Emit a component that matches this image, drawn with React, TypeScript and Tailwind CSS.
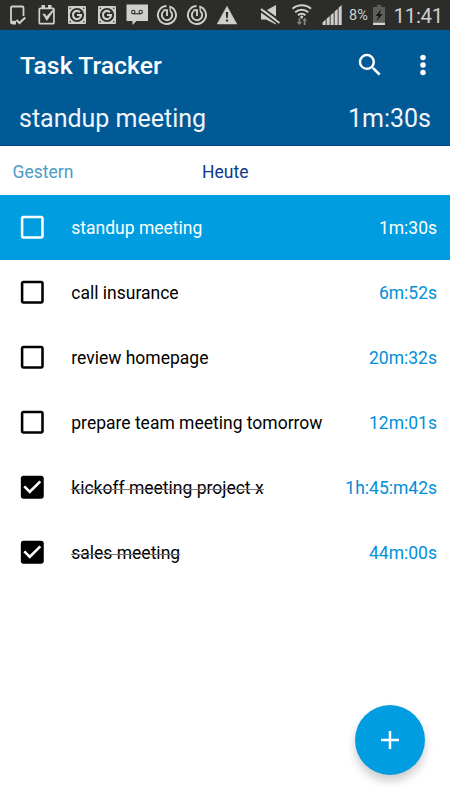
import type { ReactNode } from "react";

interface Task {
  id: number;
  title: string;
  time: string;
  done?: boolean;
  active?: boolean;
}

const TASKS: Task[] = [
  { id: 1, title: "standup meeting",               time: "1m:30s", active: true },
  { id: 2, title: "call insurance",                time: "6m:52s" },
  { id: 3, title: "review homepage",               time: "20m:32s" },
  { id: 4, title: "prepare team meeting tomorrow", time: "12m:01s" },
  { id: 5, title: "kickoff meeting project x",     time: "1h:45:m42s", done: true },
  { id: 6, title: "sales meeting",                 time: "44m:00s",    done: true },
];

// ── Status bar icons ──────────────────────────────────────
const StatusIcon = ({ children }: { children: ReactNode }) => (
  <svg viewBox="0 0 30 30" className="w-[30px] h-[30px] shrink-0" fill="currentColor">
    {children}
  </svg>
);

const DeviceCheck = () => (
  <StatusIcon>
    <path d="M14 23.500H10.200A1.200 1.200 0 0 1 9 22.300V7.700A1.200 1.200 0 0 1 10.200 6.500H20.300A1.200 1.200 0 0 1 21.500 7.700V16" fill="none" stroke="currentColor" strokeWidth="1.800" />
    <path d="M9 20.800h5v3.200H9z" />
    <path d="M14.500 20l3 3 5.800-5.500" fill="none" stroke="currentColor" strokeWidth="2" />
  </StatusIcon>
);

const ClipboardCheck = () => (
  <StatusIcon>
    <rect x="7.300" y="8.300" width="14.600" height="15.400" rx="1" fill="none" stroke="currentColor" strokeWidth="1.700" />
    <path d="M9.500 5h3.500v3H9.500zM16 5h3.500v3H16z" />
    <path d="M10.300 13.500l3 .5 1.200 2.200L21 9.500l2-.5-8.200 12z" />
  </StatusIcon>
);

const GearBox = () => (
  <StatusIcon>
    <rect x="6" y="6" width="18" height="18" rx="1" />
    <circle cx="15" cy="15" r="7.100" fill="#2c2c2a" />
    <path d="M18 12.200a4.100 4.100 0 1 0 1.100 2.800H15" fill="none" stroke="currentColor" strokeWidth="2.100" />
    <g fill="#2c2c2a">
      <circle cx="8.200" cy="8.200" r=".8" />
      <circle cx="21.800" cy="8.200" r=".8" />
      <circle cx="8.200" cy="21.800" r=".8" />
      <circle cx="21.800" cy="21.800" r=".8" />
    </g>
  </StatusIcon>
);

const Voicemail = () => (
  <StatusIcon>
    <path d="M4.500 4.500h21.500v16.500H14.500l-4 4V21h-6z" />
    <g fill="none" stroke="#2c2c2a" strokeWidth="1.100">
      <circle cx="11.300" cy="12" r="1.700" />
      <circle cx="18.700" cy="12" r="1.700" />
      <path d="M11.300 13.800h7.400" />
    </g>
  </StatusIcon>
);

const PowerRing = () => (
  <StatusIcon>
    <g fill="none" stroke="currentColor" strokeWidth="1.900">
      <path d="M17.300 6.300A9 9 0 1 1 14.500 6" />
      <path d="M18.200 10.900a5.200 5.200 0 1 1-6.600.2" />
      <path d="M18.200 7v4.200" strokeWidth="1.300" />
      <path d="M11.300 10.300h3.700v5.700" />
    </g>
  </StatusIcon>
);

const Warning = () => (
  <StatusIcon>
    <path d="M15 6.200L24.800 24H5.200z" stroke="currentColor" strokeWidth=".5" strokeLinejoin="round" />
    <path d="M13.800 12h2.400l-.4 6h-1.600zM13.900 19.500h2.200v2.100h-2.200z" fill="#2c2c2a" />
  </StatusIcon>
);

const Muted = () => (
  <StatusIcon>
    <path d="M5 10.500h5L20 5v19.500l-10-5H5z" />
    <path d="M4.500 11l20 14.500" stroke="#2c2c2a" strokeWidth="2" />
    <path d="M4.500 6.500l20 14.500" stroke="#2c2c2a" strokeWidth="2" />
    <path d="M5 9l18.500 14" stroke="currentColor" strokeWidth="1.800" />
  </StatusIcon>
);

const Wifi = () => (
  <StatusIcon>
    <g fill="none" stroke="currentColor" strokeWidth="2">
      <path d="M6.500 8.800a14 14 0 0 1 18.500 0" />
      <path d="M9.200 12.300a9.600 9.600 0 0 1 13 0" />
      <path d="M12 15.300a5.500 5.500 0 0 1 7.400 0" />
    </g>
    <circle cx="15.700" cy="16.900" r="1.500" />
    <path d="M12.600 18v4h-2l2.800 3 2.700-3h-1.800v-4zM17.700 25v-4.200h-1.500l2.500-3 2.500 3h-1.700V25z" fill="#858583" />
  </StatusIcon>
);

const Signal = () => (
  <StatusIcon>
    <path d="M6.500 22.500l3.200-2.900v5.400H6.500zM10.600 18.800l3.100-2.800v9h-3.100zM14.600 15.200l3.100-2.800V25h-3.100zM18.600 11.500l3.100-2.800V25h-3.100zM22.600 7.700L25.700 5v20h-3.100z" />
  </StatusIcon>
);

const Battery = () => (
  <svg viewBox="0 0 14 30" className="w-[14px] h-[30px] shrink-0">
    <path d="M5 5h4v2h4v18H1V7h4z" fill="#5e5e5c" />
    <path d="M9.500 9L3.500 16h3.200L4.500 21l6.200-7H7.500z" fill="#171716" />
    <path d="M1 22.800h12V25H1z" fill="#d6d6d4" />
  </svg>
);

const StatusBar = () => (
  <div className="flex items-center h-[30px] pl-[2px] bg-[#2c2c2a] text-[#cfcfcd]">
    <DeviceCheck />
    <ClipboardCheck />
    <GearBox />
    <GearBox />
    <Voicemail />
    <PowerRing />
    <PowerRing />
    <Warning />
    <div className="w-[14px]" />
    <Muted />
    <Wifi />
    <Signal />
    <span className="ml-[3px] w-[22.500px] pt-[2px] text-[14.500px] leading-[30px] whitespace-nowrap">8%</span>
    <Battery />
    <span className="ml-[8px] pt-px text-[20.500px] leading-[30px] tracking-[-0.300px]">11:41</span>
  </div>
);

// ── Header ────────────────────────────────────────────────
const Header = () => (
  <header className="h-[116px] bg-[#005a96] text-white border-b border-[#00418a]">
    <div className="flex items-center h-[70px] pl-[20px] pr-[12.500px]">
      <h1 className="flex-1 pt-[2px] text-[24.800px] font-medium leading-[30px]">Task Tracker</h1>
      <button aria-label="Search">
        <svg viewBox="0 0 24 24" className="w-[30px] h-[30px]" fill="currentColor">
          <path d="M15.500 14h-.79l-.28-.27A6.471 6.471 0 0 0 16 9.500 6.500 6.500 0 1 0 9.500 16c1.610 0 3.090-.59 4.230-1.570l.27.28v.79l5 4.990L20.490 19l-4.990-5zm-6 0C7.010 14 5 11.990 5 9.500S7.010 5 9.500 5 14 7.010 14 9.500 11.990 14 9.500 14z" />
        </svg>
      </button>
      <button aria-label="More" className="ml-[23px]">
        <svg viewBox="0 0 24 24" className="w-[30px] h-[30px]" fill="currentColor">
          <circle cx="12" cy="6" r="2.200" />
          <circle cx="12" cy="12" r="2.200" />
          <circle cx="12" cy="18" r="2.200" />
        </svg>
      </button>
    </div>
    <div className="flex justify-between pt-[4px] px-[19px] text-[25px] leading-[30px] text-[#f0f5fa]">
      <span>standup meeting</span>
      <span>1m:30s</span>
    </div>
  </header>
);

// ── Task list ─────────────────────────────────────────────
const Checkbox = ({ checked }: { checked?: boolean }) => (
  <svg viewBox="0 0 24 24" className="w-[30.600px] h-[30.600px] shrink-0" fill="currentColor">
    {checked ? (
      <path d="M19 3H5c-1.110 0-2 .9-2 2v14c0 1.100.89 2 2 2h14c1.110 0 2-.9 2-2V5c0-1.100-.89-2-2-2zm-9 14l-5-5 1.410-1.410L10 14.170l7.590-7.590L19 8l-9 9z" />
    ) : (
      <path d="M19 5v14H5V5h14m0-2H5c-1.100 0-2 .9-2 2v14c0 1.100.9 2 2 2h14c1.100 0 2-.9 2-2V5c0-1.100-.9-2-2-2z" />
    )}
  </svg>
);

const TaskRow = ({ task }: { task: Task }) => (
  <li className={`flex items-center h-[65px] pl-[17.200px] pr-[13px] text-[17.500px] leading-[22px]
    ${task.active ? "bg-[#009ee0] text-white" : "text-black"}`}>
    <Checkbox checked={task.done} />
    <span className="relative ml-[23.500px] pt-px">
      {task.title}
      {task.done && <span className="absolute left-0 right-0 top-[13px] h-px bg-[#777777]" />}
    </span>
    <span className={`ml-auto pt-px ${task.active ? "text-white" : "text-[#008fdb]"}`}>{task.time}</span>
  </li>
);

export default function App() {
  return (
    <div className="relative w-[450px] h-[800px] overflow-hidden bg-white font-['Roboto',sans-serif]">
      <StatusBar />
      <Header />
      <nav className="flex items-center h-[49px] pl-[12.500px] pt-[2px] text-[17.500px] leading-[22px]">
        <span className="w-[189.500px] text-[#4d9ac6]">Gestern</span>
        <span className="text-[#0b3a8c]">Heute</span>
      </nav>
      <ul>
        {TASKS.map((task) => (
          <TaskRow key={task.id} task={task} />
        ))}
      </ul>
      <button
        aria-label="Add task"
        className="absolute right-[25px] bottom-[25px] flex items-center justify-center w-[70px] h-[70px] rounded-full bg-[#009ee0] text-white shadow-[0_6px_10px_rgba(0,0,0,0.200)]"
      >
        <svg viewBox="0 0 30 30" className="w-[30px] h-[30px]" stroke="currentColor" strokeWidth="2.500">
          <path d="M15 6v18M6 15h18" />
        </svg>
      </button>
    </div>
  );
}
